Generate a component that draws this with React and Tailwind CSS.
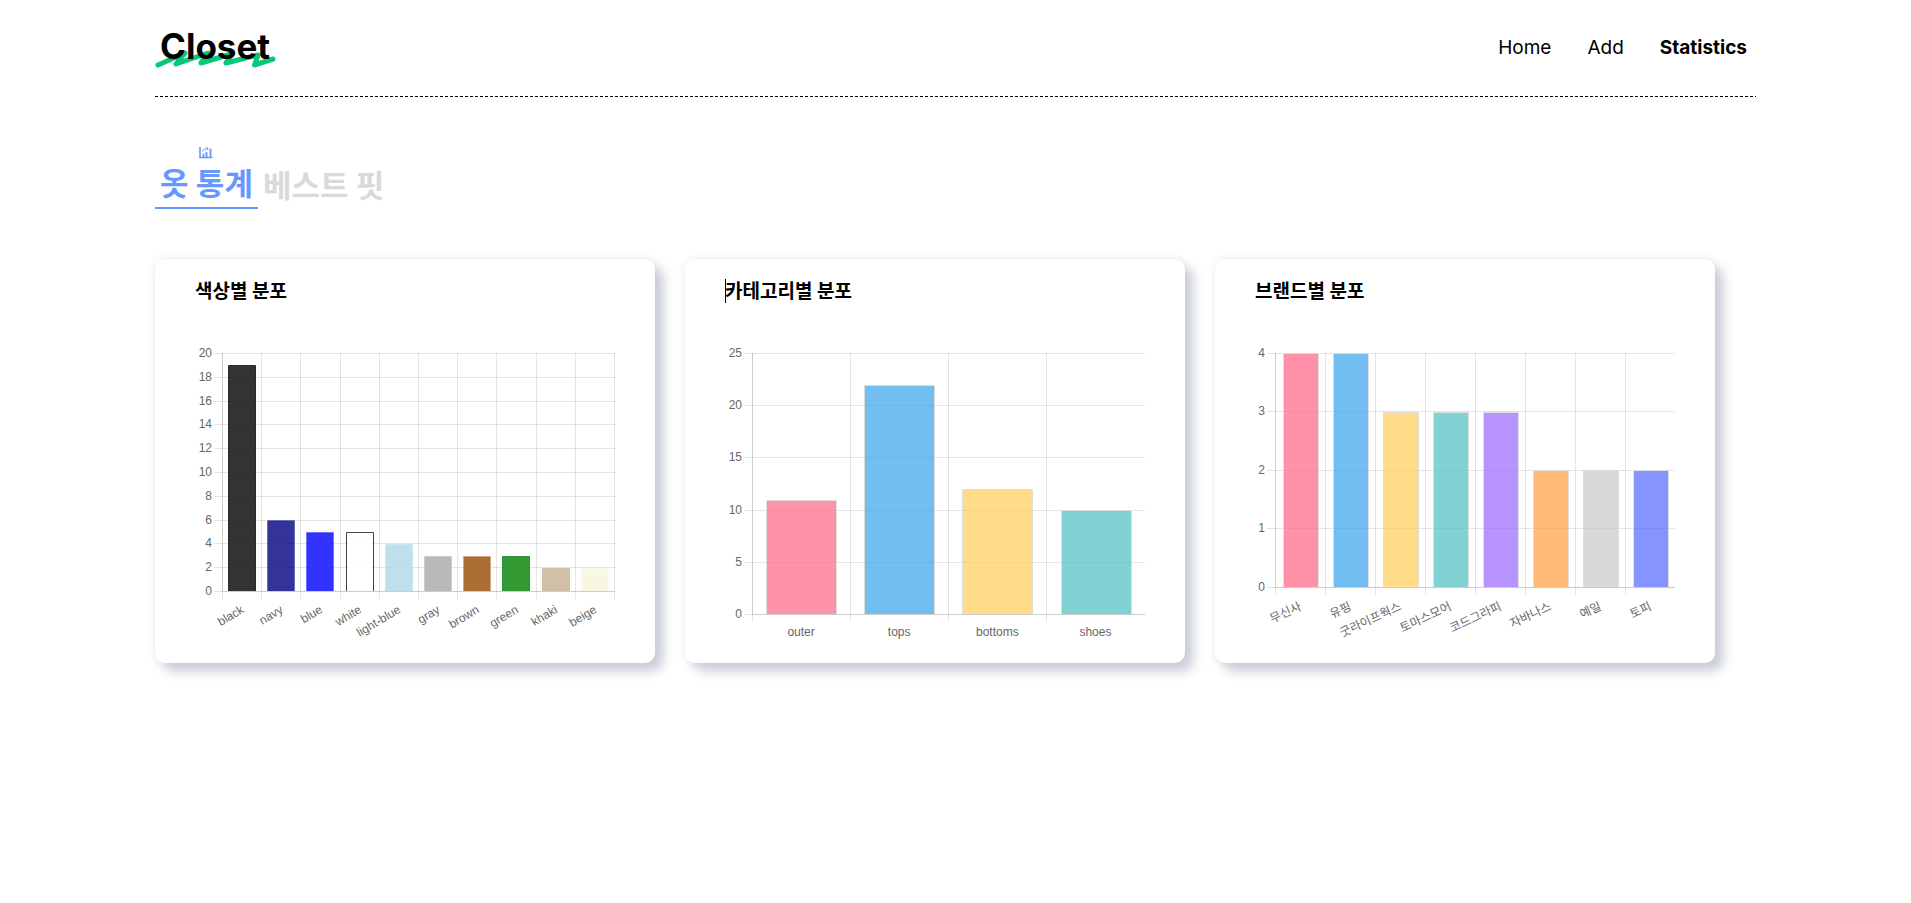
const font = "font-['Inter','Noto_Sans_CJK_KR',sans-serif]";

const colorChart = {
  title: '색상별 분포', axisX: 27, right: 419, zeroY: 248, max: 20, step: 2, angle: -31, closed: true, labelY: 14,
  items: [
    ['black', 19, '#000000', '#2b2b2b'], ['navy', 6, '#000080', '#6c6cb8'], ['blue', 5, '#0000ff', '#7070ff'],
    ['white', 5, '#ffffff', '#444444'], ['light-blue', 4, '#add8e6', '#c9e5ed'], ['gray', 3, '#a9a9a9', '#cccccc'],
    ['brown', 3, '#964b00', '#cfa982'], ['green', 3, '#008000', '#2f912f'], ['khaki', 2, '#c3b091', '#cdbd9f'],
    ['beige', 2, '#f5f5dc', '#fafaee'],
  ],
  alpha: 0.8,
};
const categoryChart = {
  title: '카테고리별 분포', axisX: 27, right: 419.5, zeroY: 271, max: 25, step: 5, angle: 0, labelY: 22,
  items: [
    ['outer', 11, '#ff6384', '#dedede'], ['tops', 22, '#36a2eb', '#dedede'],
    ['bottoms', 12, '#ffce56', '#dedede'], ['shoes', 10, '#4bc0c0', '#dedede'],
  ],
  alpha: 0.7,
};
const brandChart = {
  title: '브랜드별 분포', axisX: 20, right: 420, zeroY: 244, max: 4, step: 1, angle: -25, labelY: 15,
  items: [
    ['무신사', 4, '#ff6384', '#dedede'], ['유핑', 4, '#36a2eb', '#dedede'], ['굿라이프웍스', 3, '#ffce56', '#dedede'],
    ['토마스모어', 3, '#4bc0c0', '#dedede'], ['코드그라피', 3, '#9966ff', '#dedede'], ['자바나스', 2, '#ff9f40', '#dedede'],
    ['예일', 2, '#c7c7c7', '#dedede'], ['토피', 2, '#5366ff', '#dedede'],
  ],
  alpha: 0.7,
};

function BarChart({ chart }) {
  const { title, axisX, right, zeroY, max, step, angle, items, alpha, closed, labelY } = chart;
  const top = 10;
  const slot = (right - axisX) / items.length;
  const barWidth = slot * 0.72;
  const valueY = (v) => zeroY - ((zeroY - top) * v) / max;
  const gridY = (v) => Math.ceil(valueY(v) - 0.5) + 0.5;
  const ticks = Array.from({ length: max / step + 1 }, (_, i) => i * step);
  const columns = Array.from({ length: items.length + (closed ? 1 : 0) }, (_, i) => i);
  return (
    <svg viewBox="0 0 420 300" role="img" aria-label={title} className="block w-full font-['Liberation_Sans','Noto_Sans_CJK_KR',sans-serif] text-[12px]">
      <g stroke="#000" strokeOpacity="0.1">
        {ticks.map((t) => <line key={t} x1={axisX - 8} x2="420" y1={gridY(t)} y2={gridY(t)} />)}
        {columns.map((i) => {
          const x = Math.round(axisX + slot * i) + 0.5;
          return <line key={i} x1={x} x2={x} y1={top} y2={zeroY + 8} />;
        })}
        <line x1={axisX} x2="420" y1={zeroY + 0.5} y2={zeroY + 0.5} />
        <line x1={axisX + 0.5} x2={axisX + 0.5} y1={top} y2={zeroY} />
      </g>
      {items.map(([name, value, fill, edge], i) => {
        const x = Math.round(axisX + 0.5 + slot * i + (slot - barWidth) / 2);
        const w = Math.round(barWidth);
        const y = value === max ? top : Math.round(valueY(value) + 0.4);
        return (
          <g key={name}>
            <rect x={x + 1} y={y + 1} width={w - 2} height={zeroY - y - 1} fill={fill} fillOpacity={alpha} />
            <path d={`M${x + 0.5} ${zeroY}V${y + 0.5}H${x + w - 0.5}V${zeroY}`} fill="none" stroke={edge} />
          </g>
        );
      })}
      <g fill="#666">
        {ticks.map((t) => <text key={t} x={axisX - 10} y={gridY(t) + 3.5} textAnchor="end">{t}</text>)}
        {items.map(([name], i) => {
          const cx = axisX + slot * (i + 0.5);
          const cy = zeroY + labelY;
          return angle
            ? <text key={name} transform={`translate(${cx - 1} ${cy}) rotate(${angle})`} x="0" y="8" textAnchor="end">{name}</text>
            : <text key={name} x={cx} y={cy} textAnchor="middle">{name}</text>;
        })}
      </g>
    </svg>
  );
}

function ChartCard({ chart, caret }) {
  return (
    <section className="w-[500px] max-w-full rounded-[10px] bg-white px-10 py-5 shadow-[8px_8px_12px_#c8cbd8,0_0_10px_rgba(0,0,0,0.08)]">
      <h3 className="relative text-[19px] leading-[26px] font-bold">
        {caret && <span className="absolute top-0 left-0 h-6 w-px bg-black" />}
        {chart.title}
      </h3>
      <div className="mt-[38px]">
        <BarChart chart={chart} />
      </div>
    </section>
  );
}

export default function App() {
  return (
    <div className={`mx-auto min-h-screen max-w-[1601px] bg-white pb-10 text-black ${font}`}>
      <header className="flex h-24 items-center justify-between">
        <a href="#home" className="relative px-[5px] pb-1 text-[35px] leading-9 font-bold">
          <svg viewBox="0 0 122 20" className="absolute top-[21px] left-0 h-5 w-[122px]" fill="none" stroke="#06c878" strokeWidth="5" strokeLinecap="round" strokeLinejoin="round" aria-hidden="true">
            <path d="M3 16L30 4L21 15L53 4L46 14L76 5L71 14L103 6L99.500 16L118 10" />
          </svg>
          <span className="relative">Closet</span>
        </a>
        <nav className="flex gap-9 pr-[9px] text-[19px] leading-6">
          <a href="#home">Home</a>
          <a href="#add">Add</a>
          <a href="#statistics" className="font-bold">Statistics</a>
        </nav>
      </header>
      <div className="h-px bg-[repeating-linear-gradient(to_right,#000_0px,#000_3px,transparent_3px,transparent_5px)]" />
      <main className="pt-[50px]">
        <div className="flex items-end">
          <button type="button" className="flex flex-col items-center gap-[2px] border-b-2 border-[#6798ff] px-[5px] text-[31px] leading-[46px] font-bold text-[#6798ff]">
            <svg viewBox="0 0 14 12" className="h-3 w-[14px]" fill="none" stroke="#6798f4" aria-hidden="true">
              <path d="M1 0V10.500H13.500" strokeWidth="1.600" />
              <path d="M4.500 10V6.500M7.500 10V5M11.500 10V1.500" strokeWidth="1.800" />
              <path d="M3 4.500L5.500 2.200L6.500 3L8.500 1M6.500 0.800H8.700V3" />
            </svg>
            옷 통계
          </button>
          <button type="button" className="px-[5px] text-[31px] leading-[46px] font-bold text-[#d9d9d9]">베스트 핏</button>
        </div>
        <div className="mt-[50px] flex flex-wrap gap-[30px]">
          <ChartCard chart={colorChart} />
          <ChartCard chart={categoryChart} caret />
          <ChartCard chart={brandChart} />
        </div>
      </main>
    </div>
  );
}
